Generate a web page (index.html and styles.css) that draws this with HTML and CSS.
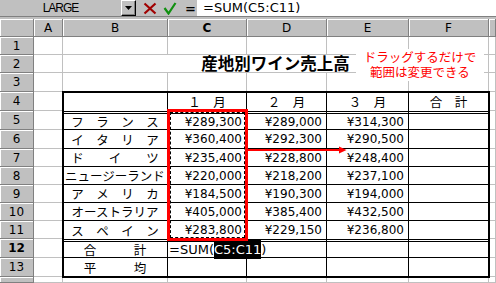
FILE: index.html
```html
<!DOCTYPE html>
<html lang="ja">
<head>
    <meta charset="UTF-8">
    <title>産地別ワイン売上高</title>
    <link rel="stylesheet" href="styles.css">
</head>
<body>
<div class="app">

    <!-- formula bar -->
    <div class="fbar">
        <div class="namebox">LARGE</div>
        <div class="drop">
            <svg width="7" height="4" viewBox="0 0 7 4"><polygon points="0,0 7,0 3.5,4" fill="#000"/></svg>
        </div>
        <div class="tools">
            <svg class="ico" width="14" height="13" viewBox="0 0 14 13">
                <path d="M1.5 1.5 L12.5 11.5 M12.5 1.5 L1.5 11.5" stroke="#a00000" stroke-width="2.2" fill="none"/>
            </svg>
            <svg class="ico" width="14" height="13" viewBox="0 0 14 13">
                <path d="M1.5 6 L5.5 11.5 L12.5 1" stroke="#109010" stroke-width="2.2" fill="none"/>
            </svg>
            <span class="eq">=</span>
        </div>
        <div class="formula">=SUM(C5:C11)</div>
    </div>

    <!-- sheet -->
    <div class="sheet">
        <div class="h"></div><div class="h">A</div><div class="h">B</div><div class="h on">C</div><div class="h">D</div><div class="h">E</div><div class="h">F</div><div class="h"></div>

        <div class="h rh">1</div><div class="c"></div><div class="c"></div><div class="c"></div><div class="c"></div><div class="c"></div><div class="c"></div><div class="c"></div>
        <div class="h rh">2</div><div class="c"></div><div class="c"></div>
        <div class="h rh">3</div><div class="c"></div><div class="c"></div><div class="c"></div><div class="c"></div><div class="c"></div><div class="c"></div><div class="c"></div>
        <div class="h rh">4</div><div class="c"></div><div class="c"></div>
        <div class="h rh">5</div><div class="c"></div><div class="c"></div>
        <div class="h rh">6</div><div class="c"></div><div class="c"></div>
        <div class="h rh">7</div><div class="c"></div><div class="c"></div>
        <div class="h rh">8</div><div class="c"></div><div class="c"></div>
        <div class="h rh">9</div><div class="c"></div><div class="c"></div>
        <div class="h rh">10</div><div class="c"></div><div class="c"></div>
        <div class="h rh">11</div><div class="c"></div><div class="c"></div>
        <div class="h rh on">12</div><div class="c"></div><div class="c"></div>
        <div class="h rh">13</div><div class="c"></div><div class="c"></div>
        <div class="h rh"></div><div class="c"></div><div class="c"></div><div class="c"></div><div class="c"></div><div class="c"></div><div class="c"></div><div class="c"></div>

        <div class="title">産地別ワイン売上高</div>

        <div class="tbl">
            <div class="t nb"></div><div class="t nb mh">１　月</div><div class="t nb mh">２　月</div><div class="t nb mh">３　月</div><div class="t nb mh">合　計</div>

            <div class="t dt lb">フ　ラ　ン　ス</div><div class="t dt n">¥289,300</div><div class="t dt n">¥289,000</div><div class="t dt n">¥314,300</div><div class="t dt"></div>
            <div class="t lb">イ　タ　リ　ア</div><div class="t n">¥360,400</div><div class="t n">¥292,300</div><div class="t n">¥290,500</div><div class="t"></div>
            <div class="t lb">ド　　イ　　ツ</div><div class="t n">¥235,400</div><div class="t n">¥228,800</div><div class="t n">¥248,400</div><div class="t"></div>
            <div class="t lb">ニュージーランド</div><div class="t n">¥220,000</div><div class="t n">¥218,200</div><div class="t n">¥237,100</div><div class="t"></div>
            <div class="t lb">ア　メ　リ　カ</div><div class="t n">¥184,500</div><div class="t n">¥190,300</div><div class="t n">¥194,000</div><div class="t"></div>
            <div class="t lb">オーストラリア</div><div class="t n">¥405,000</div><div class="t n">¥385,400</div><div class="t n">¥432,500</div><div class="t"></div>
            <div class="t nb lb">ス　ペ　イ　ン</div><div class="t nb n">¥283,800</div><div class="t nb n">¥229,150</div><div class="t nb n">¥236,800</div><div class="t nb"></div>

            <div class="t dt lb">合　　　計</div><div class="t dt fx"><span>=SUM(<span class="sel">C5:C11</span>)</span></div><div class="t dt"></div><div class="t dt"></div><div class="t dt"></div>
            <div class="t lb">平　　　均</div><div class="t"></div><div class="t"></div><div class="t"></div><div class="t"></div>
        </div>

        <div class="range"></div>
    </div>

    <!-- drag arrow and note box -->
    <svg class="arrow" width="100" height="8" viewBox="0 0 100 8">
        <rect x="0" y="3" width="94" height="2" fill="#f00"/>
        <polygon points="92,0.5 99.5,4 92,7.5" fill="#f00"/>
    </svg>
    <div class="note">ドラッグするだけで<br>範囲は変更できる</div>

</div>
</body>
</html>
```

FILE: styles.css
```css
* {
    box-sizing: border-box;
}
body {
    margin: 0;
    font-family: "DejaVu Sans", sans-serif;
    font-size: 12px;
    color: #000;
    background: #fff;
}
.app {
    position: relative;
    width: 496px;
    height: 283px;
    overflow: hidden;
    background: #c0c0c0;
}

/* formula bar */
.fbar {
    display: flex;
    height: 17px;
    margin-bottom: 2px;
    border-bottom: 1px solid #808080;
}
.namebox {
    width: 121px;
    display: flex;
    align-items: center;
    justify-content: center;
    font-family: "Liberation Sans", sans-serif;
    font-size: 12px;
    letter-spacing: -1px;
}
.drop {
    width: 15px;
    display: flex;
    align-items: center;
    justify-content: center;
    border: 1px solid;
    border-color: #fff #000 #000 #fff;
    box-shadow: inset -1px -1px #808080;
}
.tools {
    width: 61px;
    display: flex;
    align-items: center;
    padding-left: 7px;
    gap: 6px;
}
.eq {
    font-weight: bold;
    font-size: 13px;
    margin-left: 2px;
}
.formula {
    flex: 1;
    background: #fff;
    padding-left: 6px;
    font-size: 13px;
    line-height: 16px;
}

/* sheet grid */
.sheet {
    display: grid;
    grid-template-columns: 34px 29px 105px 79px 80px 82px 80px 1fr;
    grid-template-rows: 18px 18px 18px 19px 19px 19px 19px 18px 18px 18px 18px 18px 19px 19px 1fr;
    height: 264px;
    background: #fff;
}
.c {
    border-right: 1px solid #c0c0c0;
    border-bottom: 1px solid #c0c0c0;
}
.h {
    display: flex;
    align-items: center;
    justify-content: center;
    background: #c0c0c0;
    border-right: 1px solid #808080;
    border-bottom: 1px solid #808080;
    box-shadow: inset 1px 1px #fff;
}
.h.on {
    font-weight: bold;
}

.title {
    grid-row: 3;
    grid-column: 3 / 8;
    display: flex;
    align-items: flex-end;
    justify-content: center;
    background: #fff;
    border-right: 1px solid #c0c0c0;
    border-bottom: 1px solid #c0c0c0;
    font-family: "Noto Sans CJK JP", sans-serif;
    font-weight: bold;
    font-size: 16.5px;
    line-height: 17px;
}

/* bordered table */
.tbl {
    grid-row: 5 / 15;
    grid-column: 3 / 8;
    position: relative;
    display: grid;
    grid-template-columns: 105px 79px 80px 82px 80px;
    grid-template-rows: 19px 19px 19px 18px 18px 18px 18px 18px 19px 19px;
    background: #fff;
}
.tbl::after {
    content: "";
    position: absolute;
    top: -1px;
    left: -1px;
    right: -1px;
    bottom: -1px;
    border: 2px solid #000;
}
.t {
    display: flex;
    align-items: center;
    white-space: nowrap;
    border-right: 1px solid #000;
    border-bottom: 1px solid #000;
}
.t.nb {
    border-bottom: 0;
}
.t.dt {
    border-top: 3px double #000;
}
.lb, .mh {
    justify-content: center;
    font-family: "Noto Sans CJK JP", sans-serif;
    font-size: 12.5px;
}
.n {
    justify-content: flex-end;
    padding-right: 4px;
}
.fx {
    font-size: 13px;
    padding-left: 1px;
}
.fx > span {
    position: relative;
    z-index: 2;
}
.sel {
    background: #000;
    color: #fff;
    padding: 3px 0 2px;
}

/* C5:C11 range being dragged */
.range {
    grid-row: 6 / 13;
    grid-column: 4 / 5;
    position: relative;
    margin: -2px -1px -2px -1px;
    border: 3px solid #f00;
    z-index: 3;
}
.range::before {
    content: "";
    position: absolute;
    top: 0;
    left: 0;
    right: 0;
    bottom: 0;
    border: 1px dashed #000;
}

.arrow {
    position: absolute;
    left: 247px;
    top: 146px;
}
.note {
    position: absolute;
    left: 356px;
    top: 49px;
    width: 128px;
    height: 32px;
    background: #fff;
    color: #f00;
    text-align: center;
    font-family: "Noto Sans CJK JP", sans-serif;
    font-size: 12.5px;
    line-height: 15px;
}
```
